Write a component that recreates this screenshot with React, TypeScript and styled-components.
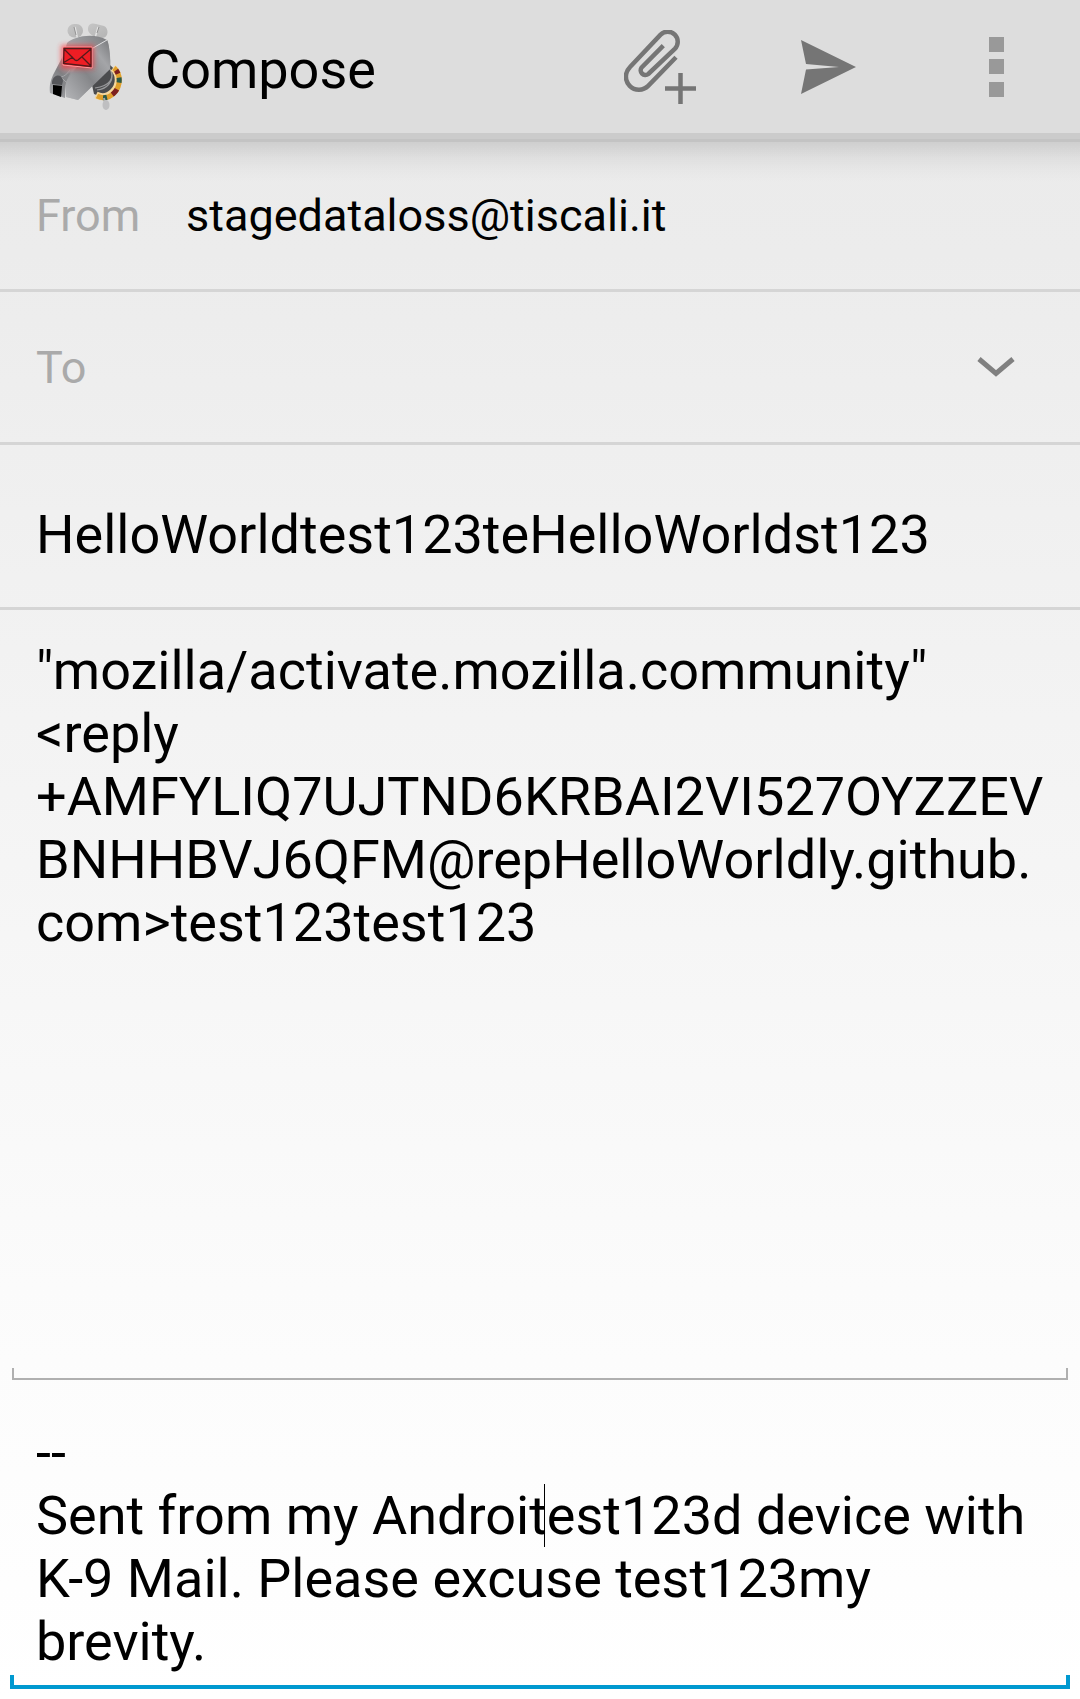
import React, { useState } from "react";
import styled, { createGlobalStyle } from "styled-components";

const GlobalStyle = createGlobalStyle`
  *, *::before, *::after { box-sizing: border-box; }
  body { margin: 0; }
  body, button, input, textarea { font-family: Roboto, "Noto Sans", sans-serif; }
`;

const Screen = styled.main`
  display: flex;
  flex-direction: column;
  min-height: 100vh;
  padding-bottom: 10px;
  color: #000;
  background: linear-gradient(#eaeaea, #ececec 15%, #f1f1f1 34%, #f6f6f6 55%, #fcfcfc 80%, #ffffff);
`;

const ActionBar = styled.header`
  display: flex;
  align-items: center;
  height: 142px;
  padding-left: 40px;
  background: #ddd;
  border-bottom: 3px solid #c3c3c3;
  box-shadow: inset 0 -6px 0 #cbcbcb;
  padding-bottom: 6px;
`;

const Title = styled.h1`
  flex: 1;
  margin: 0;
  padding: 6px 0 0 15px;
  font-size: 54px;
  line-height: 63px;
  font-weight: 400;
`;

const IconButton = styled.button`
  display: flex;
  align-items: center;
  justify-content: center;
  width: 168px;
  align-self: stretch;
  flex: none;
  padding: 0;
  border: 0;
  background: transparent;
  color: #757575;
`;

const Form = styled.form`
  display: flex;
  flex: 1;
  flex-direction: column;
`;

const Row = styled.div<{ $height: number; $shaded?: boolean }>`
  display: flex;
  align-items: center;
  min-height: ${(p) => p.$height}px;
  padding-left: 36px;
  border-bottom: 3px solid #d5d5d5;
  background: ${(p) =>
    p.$shaded
      ? "linear-gradient(rgba(0,0,0,.12), rgba(0,0,0,.05) 16px, rgba(0,0,0,.02) 28px, transparent 40px)"
      : "none"};
`;

const FieldLabel = styled.label`
  flex: none;
  width: 150px;
  color: #aaa;
  font-size: 45px;
  line-height: 53px;
`;

const Field = styled.input<{ $large?: boolean }>`
  flex: 1;
  min-width: 0;
  padding: ${(p) => (p.$large ? "16px 36px 0 0" : "0")};
  border: 0;
  outline: 0;
  background: transparent;
  color: #000;
  font-size: ${(p) => (p.$large ? 54 : 45)}px;
  line-height: ${(p) => (p.$large ? 63 : 53)}px;
`;

const Editor = styled.div<{ $grow?: boolean }>`
  position: relative;
  display: flex;
  flex: ${(p) => (p.$grow ? "1" : "none")};
  flex-direction: column;
`;

const TextArea = styled.textarea<{ $top: number }>`
  display: block;
  flex: 1;
  width: 100%;
  padding: ${(p) => p.$top}px 36px 2px;
  border: 0;
  outline: 0;
  resize: none;
  overflow: hidden;
  background: transparent;
  color: #000;
  font-size: 54px;
  line-height: 63px;
  overflow-wrap: anywhere;
`;

const Bracket = styled.div<{ $active?: boolean }>`
  height: ${(p) => (p.$active ? 14 : 12)}px;
  margin: 0 ${(p) => (p.$active ? 10 : 12)}px;
  border: solid ${(p) => (p.$active ? "#0099d0" : "#b0b0b0")};
  border-width: ${(p) => (p.$active ? "0 4px 4px" : "0 2px 2px")};
`;

const Caret = styled.span`
  position: absolute;
  top: 104px;
  left: 544px;
  width: 1px;
  height: 63px;
  background: #000;
`;

const Logo = () => (
  <svg width="90" height="101" viewBox="0 1 90 101" aria-hidden="true">
    <defs>
      <linearGradient id="side" x1="0" y1="1" x2="1" y2="0">
        <stop offset="0" stopColor="#b4b5b8" />
        <stop offset=".45" stopColor="#858689" />
        <stop offset=".75" stopColor="#a4a5a8" />
        <stop offset="1" stopColor="#77787b" />
      </linearGradient>
      <linearGradient id="top" x1="0" y1="1" x2="1" y2="0">
        <stop offset="0" stopColor="#aaabae" />
        <stop offset=".3" stopColor="#808184" />
        <stop offset=".5" stopColor="#b0b1b4" />
        <stop offset="1" stopColor="#7c7d80" />
      </linearGradient>
      <linearGradient id="ear" x1="0" y1="0" x2="1" y2="1">
        <stop offset="0" stopColor="#c6c6c6" />
        <stop offset="1" stopColor="#b4b4b4" />
      </linearGradient>
      <filter id="glow" x="-40%" y="-40%" width="180%" height="180%">
        <feGaussianBlur stdDeviation="2.5" />
      </filter>
    </defs>
    <rect x="27.500" y="9" width="15.500" height="13.500" rx="6.500" fill="url(#ear)" />
    <path d="M48 13c1-5 5-5 8-4l8 2c5 2 5 12-2 12-7 0-15-4-14-10z" fill="url(#ear)" />
    <path d="M35 12l3 14M58 12l-4 15" stroke="#e4e4e4" strokeWidth="1.500" />
    <path d="M34 12l2 8M59 12l-2 6" stroke="#929292" />
    <path d="M70 50c8 6 9 19 2 26-5 5-11 6-18 3l-2-9z" fill="#4b4c4e" />
    <path d="M70 54c5 9 0 17-15 19M72 58c1 9-5 16-15 17" fill="none" stroke="#98999b" strokeWidth="1.200" />
    <path d="M73 53c7 6 7 17 0 24-5 5-11 6-17 3" fill="none" stroke="#f5d79c" strokeWidth="7" />
    <path d="M74 53c7 6 7 18 0 25-5 5-11 6-17 3" fill="none" stroke="#e0a02c" strokeWidth="5" />
    <path d="M74 53c7 6 7 18 0 25-5 5-11 6-17 3" fill="none" stroke="#2b5a49" strokeWidth="5" strokeDasharray="0 11 5 20 4 30" />
    <path d="M74 53c7 6 7 18 0 25-5 5-11 6-17 3" fill="none" stroke="#7d2020" strokeWidth="5" strokeDasharray="0 3 4 16 7 30" />
    <path d="M64 83l1 5" stroke="#aaa" strokeWidth="2" />
    <ellipse cx="66" cy="90" rx="3.500" ry="5" fill="#bfbfc1" />
    <path d="M67 25c2 3 4 20 3 29L38 85 26 82V64l27-31z" fill="url(#side)" />
    <path d="M67 25L53 33 26 66l-1 17-15-5c-1-8 1-13 3-18l11-21 3-11c6-6 26-11 40-3z" fill="url(#top)" />
    <path d="M67 25c2 3 4 20 3 29L38 85 26 82V64l27-31z" fill="url(#side)" opacity=".7" />
    <path d="M30 58L18 63l-5 14 9 4 4-14z" fill="#858689" />
    <path d="M67 25L53 33" stroke="#dedee0" />
    <path d="M26 67l-5-5c4-1 6-3 9-7" fill="none" stroke="#a4a5a8" />
    <path d="M12 67c1-8 10-9 11-1l-1 4-10-1z" fill="#55565a" />
    <path d="M13 70l9 1-1 11-8-3z" fill="#000" />
    <rect x="21" y="30" width="33" height="24" fill="#ff2b32" opacity=".65" filter="url(#glow)" />
    <path d="M23 32h29v21l-29-3z" fill="#ee1d24" stroke="#ff9a9d" />
    <path d="M24 33.500h27v18L23.500 48.500zM24 34l11 11q1.500 1 3 0l13-11M23 48l10-6M51 51l-9-9" fill="none" stroke="#54191b" strokeWidth="1.300" />
  </svg>
);

const AttachIcon = () => (
  <svg width="72" height="74" viewBox="0 0 72 74" fill="none" stroke="currentColor" strokeWidth="4.500" aria-hidden="true">
    <path d="M39.300 15.700L17.700 37.400A4.700 4.700 0 0 0 24.300 44L50.800 18.800A10 10 0 0 0 36.600 4.600L5.800 37.300A13 13 0 0 0 24.200 55.900L52 27.300" />
    <path d="M56.500 43v31M41 58.500h31" />
  </svg>
);

const SendIcon = () => (
  <svg width="55" height="54" viewBox="0 0 55 54" fill="currentColor" aria-hidden="true">
    <path d="M0 0L55 27L0 54L5 29.500L38 27L5 24Z" />
  </svg>
);

const MoreIcon = () => (
  <svg width="15" height="60" viewBox="0 0 15 60" fill="#999" aria-hidden="true">
    <path d="M0 0h15v15H0zM0 22h15v15H0zM0 45h15v15H0z" />
  </svg>
);

const ChevronIcon = () => (
  <svg width="38" height="20" viewBox="0 0 38 20" fill="none" stroke="#808080" strokeWidth="5" aria-hidden="true">
    <path d="M2 2L19 16.500L36 2" />
  </svg>
);

const INITIAL_BODY = [
  '"mozilla/activate.mozilla.community"',
  "<reply",
  "+AMFYLIQ7UJTND6KRBAI2VI527OYZZEV",
  "BNHHBVJ6QFM@repHelloWorldly.github.",
  "com>test123test123",
].join("\n");

const INITIAL_SIGNATURE =
  "--\nSent from my Androitest123d device with K-9 Mail. Please excuse test123my brevity.";

export default function App() {
  const [from, setFrom] = useState("stagedataloss@tiscali.it");
  const [to, setTo] = useState("");
  const [subject, setSubject] = useState("HelloWorldtest123teHelloWorldst123");
  const [body, setBody] = useState(INITIAL_BODY);
  const [signature, setSignature] = useState(INITIAL_SIGNATURE);

  return (
    <Screen>
      <GlobalStyle />
      <ActionBar>
        <Logo />
        <Title>Compose</Title>
        <IconButton type="button" aria-label="Add attachment"><AttachIcon /></IconButton>
        <IconButton type="submit" form="compose" aria-label="Send"><SendIcon /></IconButton>
        <IconButton type="button" aria-label="More options"><MoreIcon /></IconButton>
      </ActionBar>
      <Form id="compose" onSubmit={(e) => e.preventDefault()}>
        <Row $height={150} $shaded>
          <FieldLabel htmlFor="from">From</FieldLabel>
          <Field id="from" spellCheck={false} value={from} onChange={(e) => setFrom(e.target.value)} />
        </Row>
        <Row $height={153}>
          <FieldLabel htmlFor="to">To</FieldLabel>
          <Field id="to" value={to} onChange={(e) => setTo(e.target.value)} />
          <IconButton type="button" aria-label="Show Cc and Bcc"><ChevronIcon /></IconButton>
        </Row>
        <Row $height={165}>
          <Field $large aria-label="Subject" spellCheck={false} value={subject} onChange={(e) => setSubject(e.target.value)} />
        </Row>
        <Editor $grow>
          <TextArea $top={29} rows={5} aria-label="Message" spellCheck={false} value={body} onChange={(e) => setBody(e.target.value)} />
          <Bracket />
        </Editor>
        <Editor>
          <TextArea $top={41} rows={4} aria-label="Signature" spellCheck={false} value={signature} onChange={(e) => setSignature(e.target.value)} />
          <Caret />
          <Bracket $active />
        </Editor>
      </Form>
    </Screen>
  );
}
